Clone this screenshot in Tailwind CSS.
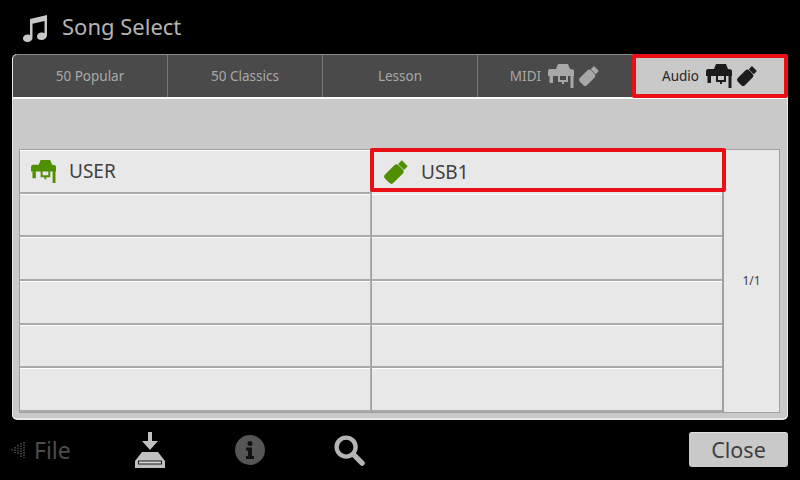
<!DOCTYPE html>
<html lang="en">
<head>
    <meta charset="UTF-8">
    <title>Song Select</title>
    <script src="https://cdn.jsdelivr.net/npm/@tailwindcss/browser@4"></script>
</head>
<body class="bg-black">
    <div class="w-[800px] h-[480px] bg-black overflow-hidden font-['Noto_Sans',sans-serif] flex flex-col">

        <!-- Title -->
        <div class="h-[54px] pl-[23px] flex items-center gap-[14px] text-[#b4b4b4]">
            <svg class="w-[25px] h-[28px] mt-[1px]" viewBox="0 0 25 28"><path fill="#c8c8c8" d="M7 5 L24 1 V21 C24 24 21 26 18.500 26 C15.500 26 14 24.500 14 22.500 C14 20 16.500 18.500 19 18.500 C20 18.500 21 18.800 21.500 19.200 V7 L9.500 9.700 V24 C9.500 26 7 28 4.500 28 C1.800 28 0 26.500 0 24.500 C0 22 2.500 20.500 5 20.500 C5.800 20.500 6.500 20.700 7 21 Z"/></svg>
            <span class="text-[22px] leading-none mb-[2px]">Song Select</span>
        </div>

        <!-- Main panel -->
        <div class="mx-[12px] w-[776px] h-[366px] bg-[#c9c9c9] rounded-[5px] border-b-2 border-x border-[#e8e8e8] border-t-0 flex flex-col">

            <!-- Tabs -->
            <div class="h-[45px] flex border-b-2 border-white bg-[#4a4a4a] border-t border-t-[#8a8a8a] rounded-t-[5px]">
                <div class="w-[155px] border-r border-[#767676] flex items-center justify-center text-[13.500px] text-[#a8a8a8]">50 Popular</div>
                <div class="w-[155px] border-r border-[#767676] flex items-center justify-center text-[13.500px] text-[#a8a8a8]">50 Classics</div>
                <div class="w-[155px] border-r border-[#767676] flex items-center justify-center text-[13.500px] text-[#a8a8a8]">Lesson</div>
                <div class="w-[155px] border-r border-[#767676] flex items-center justify-center gap-[7px] text-[13.500px] text-[#a8a8a8]">
                    <span>MIDI</span>
                    <span class="flex items-center gap-[4px]">
                        <svg class="w-[26px] h-[24px]" viewBox="0 0 26 24"><path fill="#a8a8a8" d="M2 5 H8 L10 0 H20 L22 5 Q26 5 26 7 V12 H25.500 V24 H22.500 V12 H5 V19 H1.500 V12 H0 V8 Q0 5 2 5 Z M10 12 H12 V16 H18 V12 H20 V18 H16 V20 H14 V18 H10 Z"/></svg>
                        <svg class="w-[22px] h-[22px]" viewBox="0 0 22 22"><g fill="#a8a8a8" transform="rotate(45 11 11)"><rect x="6" y="5.500" width="10" height="16" rx="2.500"/><rect x="7.500" y="0.500" width="7" height="4.500"/></g></svg>
                    </span>
                </div>
                <div class="relative flex-1 bg-[#c9c9c9] flex items-center justify-center gap-[7px] text-[13.500px] text-[#262626]">
                    <span>Audio</span>
                    <span class="flex items-center gap-[4px]">
                        <svg class="w-[26px] h-[24px]" viewBox="0 0 26 24"><path fill="#1c1c1c" d="M2 5 H8 L10 0 H20 L22 5 Q26 5 26 7 V12 H25.500 V24 H22.500 V12 H5 V19 H1.500 V12 H0 V8 Q0 5 2 5 Z M10 12 H12 V16 H18 V12 H20 V18 H16 V20 H14 V18 H10 Z"/></svg>
                        <svg class="w-[22px] h-[22px]" viewBox="0 0 22 22"><g fill="#1c1c1c" transform="rotate(45 11 11)"><rect x="6" y="5.500" width="10" height="16" rx="2.500"/><rect x="7.500" y="0.500" width="7" height="4.500"/></g></svg>
                    </span>
                    <div class="absolute left-[-1px] right-[-1px] top-[-1px] bottom-[-1px] border-[4px] border-[#ea0f14] rounded-[2px]"></div>
                </div>
            </div>

            <!-- List area -->
            <div class="mt-[50px] ml-[6px] w-[761px] h-[264px] flex border border-[#a0a0a0] bg-[#e8e8e8]">
                <div class="w-[351px] grid grid-rows-6 border-r border-[#b0b0b0]">
                    <div class="flex items-center pl-[10px] gap-[12px] border-b-2 border-[#a9a9a9] border-t border-t-white text-[#404040] text-[19px]">
                        <svg class="w-[27px] h-[23px]" viewBox="0 0 26 24"><path fill="#4f9000" d="M2 5 H8 L10 0 H20 L22 5 Q26 5 26 7 V12 H25.500 V24 H22.500 V12 H5 V19 H1.500 V12 H0 V8 Q0 5 2 5 Z M10 12 H12 V16 H18 V12 H20 V18 H16 V20 H14 V18 H10 Z"/></svg>
                        <span>USER</span>
                    </div>
                    <div class="border-b-2 border-[#a9a9a9] border-t border-t-white"></div>
                    <div class="border-b-2 border-[#a9a9a9] border-t border-t-white"></div>
                    <div class="border-b-2 border-[#a9a9a9] border-t border-t-white"></div>
                    <div class="border-b-2 border-[#a9a9a9] border-t border-t-white"></div>
                    <div class="border-b-2 border-[#a9a9a9] border-t border-t-white"></div>
                </div>
                <div class="w-[353px] grid grid-rows-6 border-l border-r-2 border-[#a0a0a0]">
                    <div class="relative flex items-center pl-[11px] gap-[12px] text-[#404040] text-[19px]">
                        <svg class="w-[26px] h-[26px]" viewBox="0 0 22 22"><g fill="#4f9000" transform="rotate(45 11 11)"><rect x="6" y="5.500" width="10" height="16" rx="2.500"/><rect x="7.500" y="0.500" width="7" height="4.500"/></g></svg>
                        <span>USB1</span>
                        <div class="absolute left-[-2px] right-[-4px] top-[-2px] bottom-[2px] border-[4px] border-[#ea0f14] rounded-[2px]"></div>
                    </div>
                    <div class="border-b-2 border-[#a9a9a9] border-t border-t-white"></div>
                    <div class="border-b-2 border-[#a9a9a9] border-t border-t-white"></div>
                    <div class="border-b-2 border-[#a9a9a9] border-t border-t-white"></div>
                    <div class="border-b-2 border-[#a9a9a9] border-t border-t-white"></div>
                    <div class="border-b-2 border-[#a9a9a9] border-t border-t-white"></div>
                </div>
                <div class="flex-1 flex items-center justify-center text-[12px] text-[#404040]">1/1</div>
            </div>
        </div>

        <!-- Bottom bar -->
        <div class="flex-1 flex items-center relative">
            <div class="ml-[11px] w-[110px] flex items-center gap-[9px] text-[#4d4d4d] text-[23px] leading-none">
                <svg class="w-[14px] h-[16px]" viewBox="0 0 14 16"><g stroke="#4d4d4d" stroke-width="1.500" stroke-dasharray="1.500 1"><path d="M1 7 V9"/><path d="M4 5 V11"/><path d="M7 3 V13"/><path d="M10 1 V15"/><path d="M13 0 V16"/></g></svg>
                <span>File</span>
            </div>
            <svg class="ml-[13px] w-[32px] h-[36px]" viewBox="0 0 32 36"><path fill="#c0c0c0" d="M14 0 H18 V9 H24 L16 18 L8 9 H14 Z M8 20 H24 L31 29 V36 H1 V29 Z"/><rect x="4" y="28.500" width="24" height="4" fill="#1c1c1c"/><rect x="5" y="29.500" width="22" height="2" fill="#d4d4d4"/></svg>
            <svg class="ml-[69px] w-[30px] h-[30px]" viewBox="0 0 30 30"><circle cx="15" cy="15" r="15" fill="#555555"/><circle cx="15" cy="8.500" r="2.500" fill="#111111"/><path fill="#111111" d="M11 12.500 H17 V21 H19 V24 H11 V21 H13 V15.500 H11 Z"/></svg>
            <svg class="ml-[69px] w-[31px] h-[31px]" viewBox="0 0 32 32"><circle cx="12.500" cy="12.500" r="9.800" fill="none" stroke="#b4b4b4" stroke-width="4.500"/><path d="M20 20 L29 29" stroke="#b4b4b4" stroke-width="5.500" stroke-linecap="round"/></svg>
            <div class="absolute left-[689px] top-[12px] w-[99px] h-[35px] rounded-[3px] bg-[#c9c9c9] border-t border-[#e0e0e0] flex items-center justify-center text-[21.500px] text-[#404040] leading-none">Close</div>
        </div>
    </div>
</body>
</html>
